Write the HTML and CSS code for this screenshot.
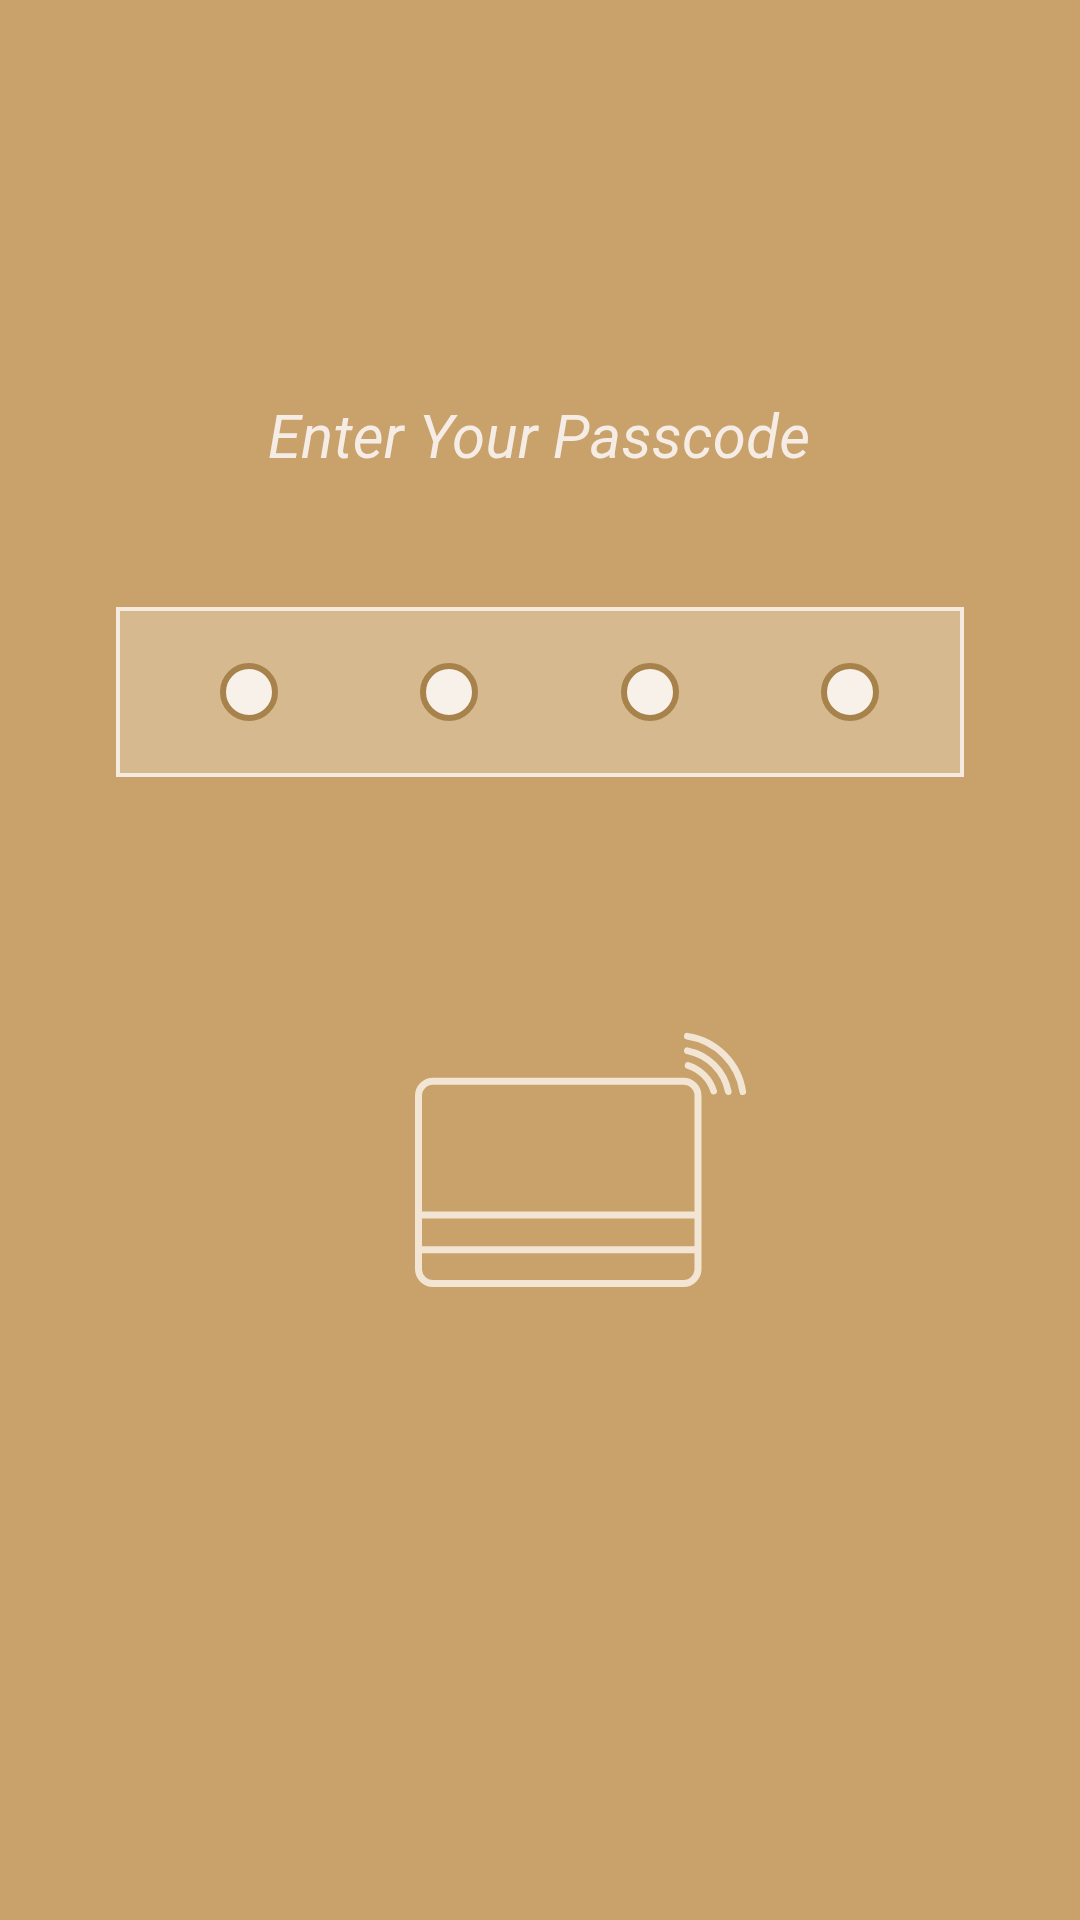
FILE: index.html
```
<!DOCTYPE html>
<html lang="en">
<head>
<meta charset="utf-8">
<title>Enter Your Passcode</title>
<link rel="stylesheet" href="styles.css">
</head>
<body>
<main class="screen">
  <h1 class="title">Enter Your Passcode</h1>
  <div class="passcode">
    <span class="dot"></span>
    <span class="dot"></span>
    <span class="dot"></span>
    <span class="dot"></span>
  </div>
  <svg class="card-icon" viewBox="410 1028 340 264" aria-hidden="true">
    <rect x="418.5" y="1081.3" width="279.5" height="202.2" rx="14.5"/>
    <path d="M419 1215H698M419 1249.7H698"/>
    <g class="waves">
      <path d="M687.3 1036.2A66 66 0 0 1 742.8 1091.7"/>
      <path d="M687.3 1050.7A52 52 0 0 1 728.3 1091.7"/>
      <path d="M688 1065.5A39 39 0 0 1 713.7 1091.2"/>
    </g>
  </svg>
</main>
</body>
</html>
```
FILE: styles.css
```
body {
  margin: 0;
  background: #c9a26b;
}

.screen {
  box-sizing: border-box;
  display: flex;
  flex-direction: column;
  align-items: center;
  height: 1920px;
  padding-top: 403px;
}

.title {
  margin: 0 2px 0 0;
  color: #f5ede5;
  font: italic 400 60px/70px Roboto, sans-serif;
  letter-spacing: 0.25px;
  white-space: nowrap;
}

.passcode {
  box-sizing: border-box;
  display: flex;
  justify-content: space-between;
  align-items: center;
  width: 848px;
  height: 170px;
  margin-top: 134px;
  padding: 0 81px 0 100px;
  border: 4px solid #f5ebe0;
  background: #d6b98f;
}

.dot {
  box-sizing: border-box;
  width: 58px;
  height: 58px;
  border: 6px solid #a7824b;
  border-radius: 50%;
  background: #f8f1ea;
}

.card-icon {
  width: 340px;
  height: 264px;
  margin: 251px 0 0 80px;
  fill: none;
  stroke: #f2e5d4;
  stroke-width: 7;
}

.waves {
  stroke-width: 6.6;
  stroke-linecap: round;
}
```
